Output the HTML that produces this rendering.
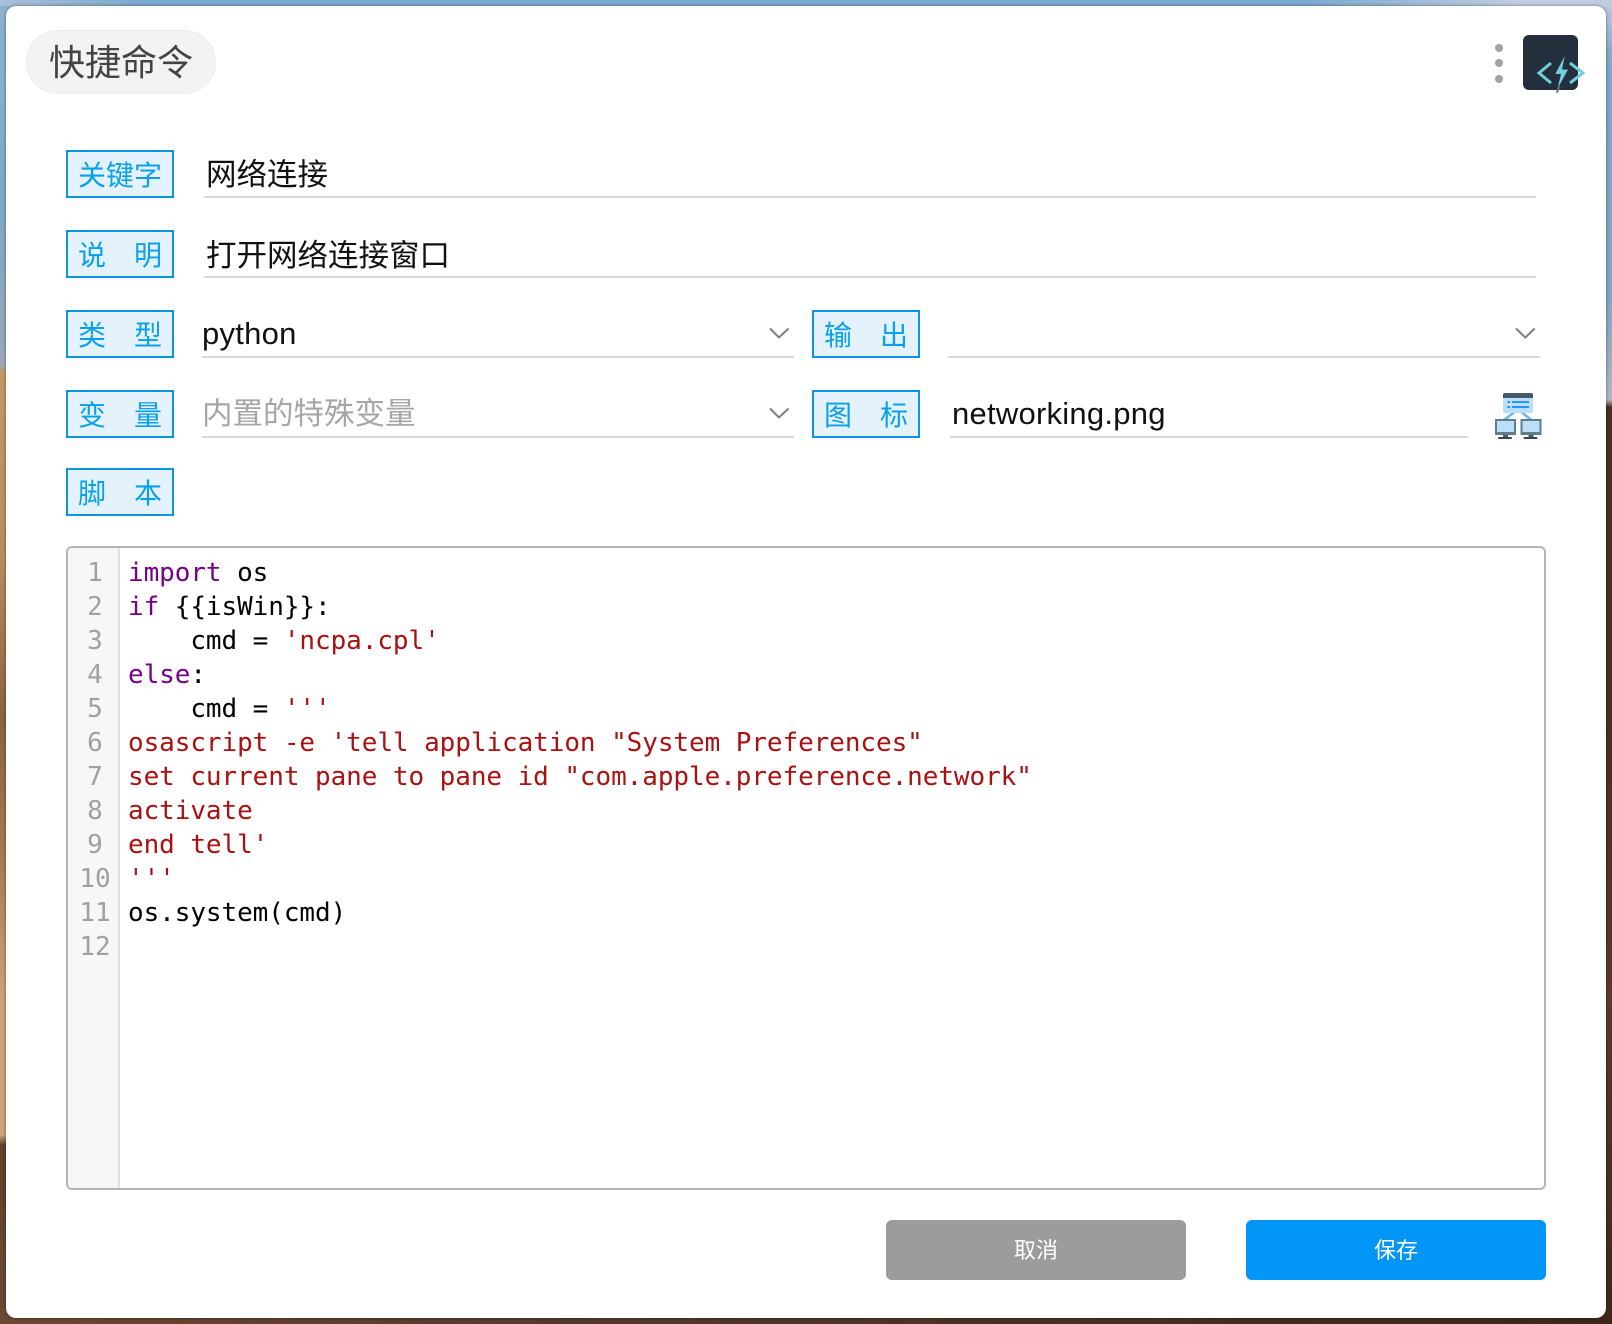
<!DOCTYPE html>
<html lang="zh-CN">
<head>
<meta charset="utf-8">
<title>快捷命令</title>
<style>
*{box-sizing:border-box;margin:0;padding:0}
html,body{width:1612px;height:1324px;overflow:hidden;background:#5a3c28}
body{position:relative;font-family:"Liberation Sans","Noto Sans CJK SC",sans-serif}
.abs{position:absolute}
#bgL{left:0;top:0;width:30px;height:1324px;background:linear-gradient(180deg,#8db2d0 0,#7fa8c8 200px,#9aa7b8 365px,#c09a68 372px,#b58c5e 560px,#8a6440 720px,#a27a50 850px,#c8a578 1000px,#c8a578 1135px,#5e412c 1145px,#6b4a35 1324px)}
#bgR{left:1582px;top:0;width:30px;height:1324px;background:linear-gradient(180deg,#c0cde0 0,#7ca8cc 60px,#7fa6c6 300px,#aeb6c4 400px,#4a2e1e 407px,#4a2e1e 700px,#5a3a28 1000px,#3e2818 1324px)}
#bgT{left:0;top:0;width:1612px;height:6px;background:linear-gradient(90deg,#a8c0d8 0,#7aa8cf 150px,#7aa8cf 1300px,#c0cde0 1520px,#c0cde0 1612px)}
#bgB{left:0;top:1318px;width:1612px;height:6px;background:linear-gradient(90deg,#6a4830 0,#54382a 600px,#3e2618 1612px)}
#win{left:6px;top:6px;width:1600px;height:1312px;background:#fff;border-radius:10px;box-shadow:0 0 3px rgba(0,0,0,.45)}
#pill{left:26px;top:30px;width:190px;height:64px;border-radius:32px;background:#f3f3f3;border:1px solid #ececec;color:#444;font-size:36px;line-height:64px;text-align:center;white-space:nowrap}
.lab{position:absolute;left:66px;width:108px;height:48px;border:2px solid #0d94e0;background:#e3f2fd;color:#0aa0ee;font-size:28px;line-height:47px;padding:0 10px;display:flex;justify-content:space-between;white-space:nowrap}
.line{position:absolute;height:2px;background:#d8d8d8}
.t{position:absolute;font-size:30.5px;line-height:44px;color:#111;white-space:nowrap}
.lat{font-size:31px;letter-spacing:.25px}
#ed{left:66px;top:546px;width:1480px;height:644px;border:2px solid #b5b5b5;border-radius:6px;overflow:hidden;background:#fff}
#gut{position:absolute;left:0;top:0;width:52px;height:100%;background:#f7f7f7;border-right:2px solid #e0e0e0}
.num,.code{font-family:"DejaVu Sans Mono","Liberation Mono",monospace;font-size:26px;line-height:34px;white-space:pre}
.num{position:absolute;left:1px;top:8px;width:52px;text-align:center;color:#a0a0a0}
.code{position:absolute;left:60px;top:8px;color:#000;letter-spacing:-.07px}
.k{color:#708}.s{color:#a11}
.btn{position:absolute;top:1220px;width:300px;height:60px;border-radius:6px;color:#fff;font-size:22px;line-height:62px;text-align:center}
</style>
</head>
<body>
<div class="abs" id="bgL"></div>
<div class="abs" id="bgR"></div>
<div class="abs" id="bgT"></div>
<div class="abs" id="bgB"></div>
<div class="abs" id="win"></div>

<div class="abs" id="pill">快捷命令</div>

<svg class="abs" style="left:0;top:0" width="1612" height="1324" viewBox="0 0 1612 1324">
  <circle cx="1499" cy="48" r="4" fill="#a2a2a2"/>
  <circle cx="1499" cy="63" r="4" fill="#a2a2a2"/>
  <circle cx="1499" cy="79" r="4" fill="#a2a2a2"/>
  <rect x="1523" y="35" width="55" height="55" rx="6" fill="#232f3c"/>
  <path d="M1551 63L1539 73L1551 83" fill="none" stroke="#6ed0d8" stroke-width="3"/>
  <path d="M1570 63L1583 73L1570 83" fill="none" stroke="#6ed0d8" stroke-width="3"/>
  <path d="M1564.7 56L1555.3 74L1561 74L1557.4 89L1568 69.5L1562 69.5Z" fill="#6ed0d8"/>
  <path d="M1558 85L1556 92.7L1557.8 92.7L1560.4 87Z" fill="#666"/>

  <path d="M770 328.5L779 337.5L788.5 328.5" fill="none" stroke="#7a8088" stroke-width="2"/>
  <path d="M1516 328.5L1525.3 337.5L1534.7 328.5" fill="none" stroke="#7a8088" stroke-width="2"/>
  <path d="M770 408.5L779 417.5L788.5 408.5" fill="none" stroke="#7a8088" stroke-width="2"/>

  <path d="M1514.7 412L1504 420M1521.3 412L1531.3 420" stroke="#64b5f6" stroke-width="2.4" fill="none"/>
  <rect x="1503" y="393" width="30" height="20" rx="2" fill="#bbdefb"/>
  <path d="M1503 398V395a2 2 0 0 1 2-2h26a2 2 0 0 1 2 2v3Z" fill="#455a64"/>
  <rect x="1507.5" y="401" width="2.6" height="2" fill="#2196f3"/>
  <rect x="1512" y="401" width="17" height="2" fill="#2196f3"/>
  <rect x="1507.5" y="406" width="2.6" height="2" fill="#2196f3"/>
  <rect x="1512" y="406" width="17" height="2" fill="#2196f3"/>
  <g>
    <rect x="1495" y="419" width="21" height="16" fill="#607d8b"/>
    <rect x="1497" y="421" width="17" height="11" fill="#bbdefb"/>
    <rect x="1503" y="435" width="5" height="2" fill="#455a64"/>
    <rect x="1498" y="437" width="14" height="2" rx="1" fill="#37474f"/>
  </g>
  <g>
    <rect x="1520.5" y="419" width="21" height="16" fill="#607d8b"/>
    <rect x="1522.5" y="421" width="17" height="11" fill="#bbdefb"/>
    <rect x="1528.5" y="435" width="5" height="2" fill="#455a64"/>
    <rect x="1523.5" y="437" width="14" height="2" rx="1" fill="#37474f"/>
  </g>
</svg>

<div class="lab" style="top:150px"><span>关</span><span>键</span><span>字</span></div>
<div class="t" style="left:206px;top:153px">网络连接</div>
<div class="line" style="left:204px;top:196px;width:1332px"></div>

<div class="lab" style="top:230px"><span>说</span><span>明</span></div>
<div class="t" style="left:206px;top:234px">打开网络连接窗口</div>
<div class="line" style="left:204px;top:276px;width:1332px"></div>

<div class="lab" style="top:310px"><span>类</span><span>型</span></div>
<div class="t lat" style="left:202px;top:312px">python</div>
<div class="line" style="left:202px;top:356px;width:592px"></div>
<div class="lab" style="top:310px;left:812px"><span>输</span><span>出</span></div>
<div class="line" style="left:948px;top:356px;width:592px"></div>

<div class="lab" style="top:390px"><span>变</span><span>量</span></div>
<div class="t" style="left:202px;top:392px;color:#a6a6a6">内置的特殊变量</div>
<div class="line" style="left:202px;top:436px;width:592px"></div>
<div class="lab" style="top:390px;left:812px"><span>图</span><span>标</span></div>
<div class="t lat" style="left:952px;top:392px">networking.png</div>
<div class="line" style="left:950px;top:436px;width:518px"></div>

<div class="lab" style="top:468px"><span>脚</span><span>本</span></div>

<div class="abs" id="ed">
  <div id="gut"></div>
  <div class="num">1
2
3
4
5
6
7
8
9
10
11
12</div>
  <div class="code"><span class="k">import</span> os
<span class="k">if</span> {{isWin}}:
    cmd = <span class="s">'ncpa.cpl'</span>
<span class="k">else</span>:
    cmd = <span class="s">'''</span>
<span class="s">osascript -e 'tell application "System Preferences"</span>
<span class="s">set current pane to pane id "com.apple.preference.network"</span>
<span class="s">activate</span>
<span class="s">end tell'</span>
<span class="s">'''</span>
os.system(cmd)</div>
</div>

<div class="btn" style="left:886px;background:#9c9c9c">取消</div>
<div class="btn" style="left:1246px;background:#0396f7">保存</div>
</body>
</html>
